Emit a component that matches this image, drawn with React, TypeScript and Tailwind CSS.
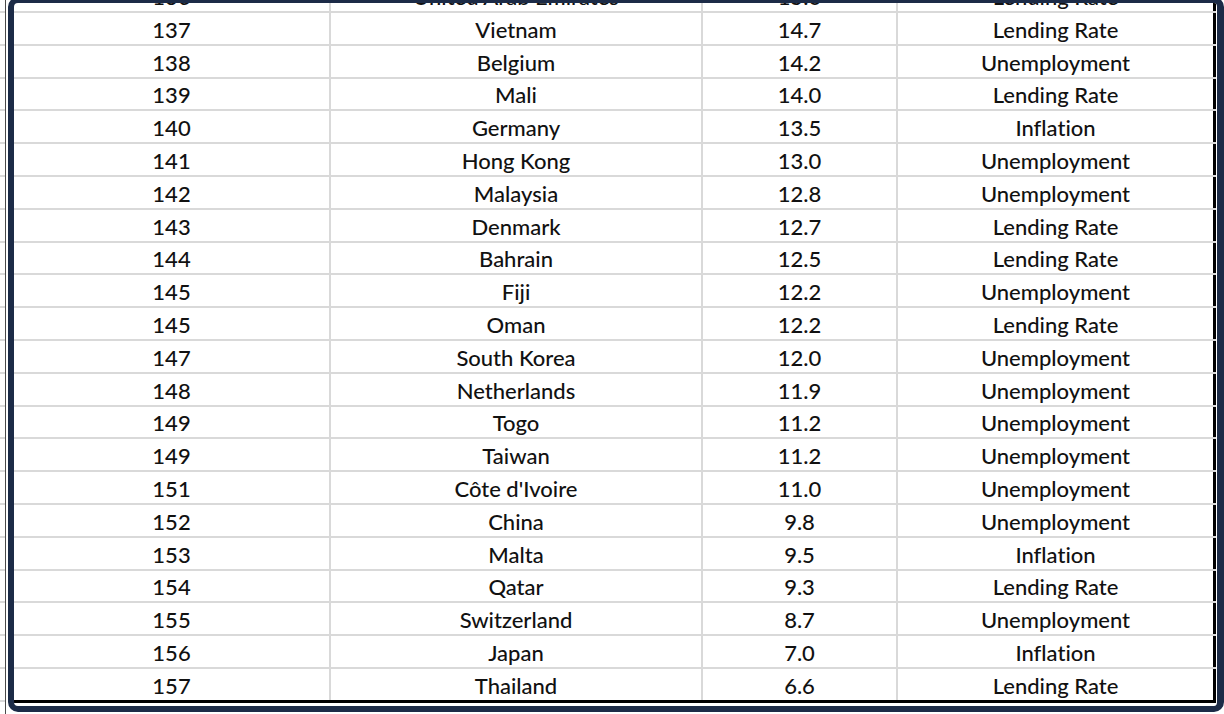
import React from "react";

const rows: [string, string, string, string][] = [
  ["136", "United Arab Emirates", "15.0", "Lending Rate"],
  ["137", "Vietnam", "14.7", "Lending Rate"],
  ["138", "Belgium", "14.2", "Unemployment"],
  ["139", "Mali", "14.0", "Lending Rate"],
  ["140", "Germany", "13.5", "Inflation"],
  ["141", "Hong Kong", "13.0", "Unemployment"],
  ["142", "Malaysia", "12.8", "Unemployment"],
  ["143", "Denmark", "12.7", "Lending Rate"],
  ["144", "Bahrain", "12.5", "Lending Rate"],
  ["145", "Fiji", "12.2", "Unemployment"],
  ["145", "Oman", "12.2", "Lending Rate"],
  ["147", "South Korea", "12.0", "Unemployment"],
  ["148", "Netherlands", "11.9", "Unemployment"],
  ["149", "Togo", "11.2", "Unemployment"],
  ["149", "Taiwan", "11.2", "Unemployment"],
  ["151", "Côte d'Ivoire", "11.0", "Unemployment"],
  ["152", "China", "9.8", "Unemployment"],
  ["153", "Malta", "9.5", "Inflation"],
  ["154", "Qatar", "9.3", "Lending Rate"],
  ["155", "Switzerland", "8.7", "Unemployment"],
  ["156", "Japan", "7.0", "Inflation"],
  ["157", "Thailand", "6.6", "Lending Rate"],
];

export default function App() {
  return (
    <div
      className="w-[1224px] h-[714px] overflow-hidden bg-white flex text-[#111111] [font-variant-ligatures:none]"
      style={{ fontFamily: "Lato, 'Open Sans', sans-serif" }}
    >
      {/* spreadsheet edge left of the frame */}
      <div className="w-[8px] h-full flex shrink-0">
        <div className="w-[5px] flex flex-col -mt-[19.8px]">
          {rows.map((_, i) => (
            <div key={i} className="h-[32.8px] shrink-0 border-b-2 border-[#d9d9d9]" />
          ))}
          <div className="h-[32.8px] shrink-0 border-b-2 border-[#d9d9d9]" />
        </div>
        <div className="w-[1px] h-full bg-[#4a4a4a]" />
      </div>

      {/* framed table */}
      <div className="w-[1216px] h-[715px] -mt-[3px] shrink-0 border-[6px] border-r-[7px] border-[#1c2b47] rounded-[10px] overflow-hidden bg-white">
        <div className="w-[1202px] flex flex-col -mt-[22.8px] text-[22px] leading-none font-medium">
          {rows.map((r, i) => {
            const last = i === rows.length - 1;
            const rowCls = last
              ? "h-[34px] border-b-[3px] border-b-black"
              : "h-[32.8px] border-b-2 border-b-[#d9d9d9]";
            return (
              <div key={i} className={`flex shrink-0 ${rowCls}`}>
                <div className="w-[317px] shrink-0 flex items-center justify-center pt-[3px] border-r-2 border-r-[#d9d9d9]">
                  {r[0]}
                </div>
                <div className="w-[372px] shrink-0 flex items-center justify-center pt-[3px] border-r-2 border-r-[#d9d9d9]">
                  {r[1]}
                </div>
                <div className="w-[195px] shrink-0 flex items-center justify-center pt-[3px] border-r-2 border-r-[#d9d9d9]">
                  {r[2]}
                </div>
                <div className="flex-1 flex items-center justify-center pt-[3px] border-r-[3px] border-r-black">
                  {r[3]}
                </div>
              </div>
            );
          })}
        </div>
      </div>
    </div>
  );
}
